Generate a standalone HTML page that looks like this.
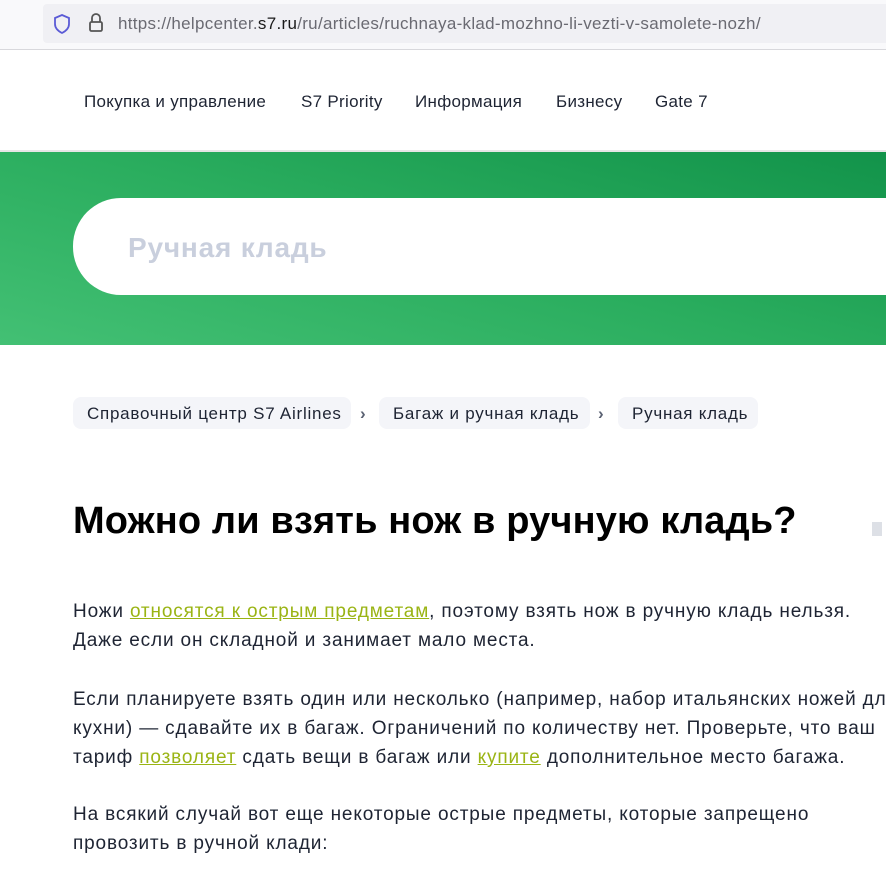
<!DOCTYPE html>
<html><head><meta charset="utf-8"><style>
*{margin:0;padding:0;box-sizing:border-box}
body{width:886px;height:881px;overflow:hidden;background:#fff;font-family:"Liberation Sans",sans-serif;color:#1e2433;position:relative}
.bar{position:absolute;left:0;top:0;width:886px;height:50px;background:#f9f9fb;border-bottom:1px solid #d8d8dc}
.url{position:absolute;left:43px;top:4px;width:843px;height:39px;background:#f0f0f4;border-radius:4px 0 0 4px}
.urltext{position:absolute;left:118px;top:14px;font-size:17px;color:#6a6a72;letter-spacing:0.3px;white-space:nowrap}
.urltext b{font-weight:normal;color:#1a1a1a}
.nav{position:absolute;top:92px;font-size:17px;color:#1e2433;white-space:nowrap;letter-spacing:0.3px}
.hero{position:absolute;left:0;top:152px;width:886px;height:193px;background:linear-gradient(15deg,#43c074 0%,#2aad5e 50%,#12934a 100%)}
.search{position:absolute;left:73px;top:198px;width:900px;height:97px;background:#fff;border-radius:48px}
.ph{position:absolute;left:128px;top:232px;font-size:28px;font-weight:bold;color:#c9cfdd;letter-spacing:0.8px}
.crumb{position:absolute;top:397px;height:32px;background:#f4f5f9;border-radius:8px;font-size:17px;line-height:33px;padding:0 14px;white-space:nowrap;letter-spacing:0.75px}
.arr{position:absolute;top:404px;font-size:17px;color:#5a6172;font-weight:bold}
h1{position:absolute;left:73px;top:500px;font-size:38px;font-weight:bold;color:#000;white-space:nowrap;letter-spacing:0.15px}
.p{position:absolute;left:73px;font-size:19px;line-height:29px;white-space:nowrap;letter-spacing:0.85px}
a{color:#9ab414;text-decoration:underline}
</style></head><body>
<div class="bar"><div class="url"></div></div>
<svg style="position:absolute;left:52px;top:13px" width="20" height="22" viewBox="0 0 20 22"><path d="M10 2 L17 5 V11 C17 15 14 18 10 20 C6 18 3 15 3 11 V5 Z" fill="none" stroke="#5b5bd6" stroke-width="1.8"/></svg>
<svg style="position:absolute;left:87px;top:12px" width="18" height="22" viewBox="0 0 18 22"><path d="M5 10 V6 A4 4 0 0 1 13 6 V10" fill="none" stroke="#555" stroke-width="1.8"/><rect x="3" y="10" width="12" height="9" rx="1.5" fill="none" stroke="#555" stroke-width="1.8"/></svg>
<div class="urltext">https://helpcenter.<b>s7.ru</b>/ru/articles/ruchnaya-klad-mozhno-li-vezti-v-samolete-nozh/</div>
<div class="nav" style="left:84px">Покупка и управление</div>
<div class="nav" style="left:301px">S7 Priority</div>
<div class="nav" style="left:415px">Информация</div>
<div class="nav" style="left:556px">Бизнесу</div>
<div class="nav" style="left:655px">Gate 7</div>
<div style="position:absolute;left:0;top:150px;width:886px;height:2px;background:#e6e6e6"></div>
<div class="hero"></div>
<div class="search"></div>
<div class="ph">Ручная кладь</div>
<div class="crumb" style="left:73px;width:278px">Справочный центр S7 Airlines</div>
<div class="arr" style="left:360px">›</div>
<div class="crumb" style="left:379px;width:211px">Багаж и ручная кладь</div>
<div class="arr" style="left:598px">›</div>
<div class="crumb" style="left:618px;width:140px">Ручная кладь</div>
<h1>Можно ли взять нож в ручную кладь?</h1>
<div style="position:absolute;left:872px;top:522px;width:10px;height:14px;background:#dde0e6"></div>
<div class="p" style="top:597px">Ножи <a>относятся к острым предметам</a>, поэтому взять нож в ручную кладь нельзя.<br>Даже если он складной и занимает мало места.</div>
<div class="p" style="top:685px">Если планируете взять один или несколько (например, набор итальянских ножей для<br>кухни) — сдавайте их в багаж. Ограничений по количеству нет. Проверьте, что ваш<br>тариф <a>позволяет</a> сдать вещи в багаж или <a>купите</a> дополнительное место багажа.</div>
<div class="p" style="top:800px">На всякий случай вот еще некоторые острые предметы, которые запрещено<br>провозить в ручной клади:</div>
</body></html>
